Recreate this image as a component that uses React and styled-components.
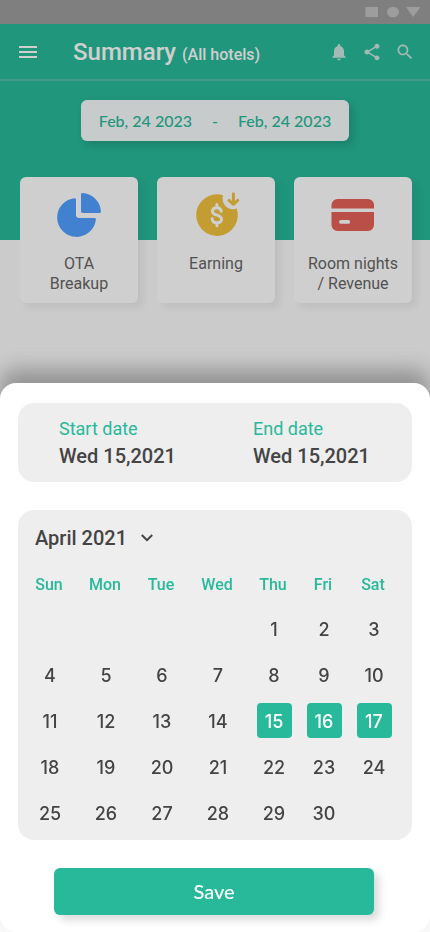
import { useState } from "react"
import styled, { createGlobalStyle } from "styled-components"

const weekDays = ["Sun", "Mon", "Tue", "Wed", "Thu", "Fri", "Sat"]

const weeks = [
  [null, null, null, null, 1, 2, 3],
  [4, 5, 6, 7, 8, 9, 10],
  [11, 12, 13, 14, 15, 16, 17],
  [18, 19, 20, 21, 22, 23, 24],
  [25, 26, 27, 28, 29, 30, null],
]

const PieIcon = () => (
  <svg width="44" height="44" viewBox="0 0 44 44" fill="#529fff">
    <path d="M17.500 5.200C18.300 5.100 19 5.700 19 6.500V22C19 23.700 20.300 25 22 25H37.500C38.300 25 39 25.700 38.900 26.500A19.400 19.400 0 1 1 17.500 5.200Z" />
    <path d="M24 1.500C24 .7 24.700 0 25.500 .1A19.500 19.500 0 0 1 43.900 18.500C44 19.300 43.300 20 42.500 20H26C24.900 20 24 19.100 24 18Z" />
  </svg>
)

const CoinIcon = () => (
  <svg width="44" height="44" viewBox="-2 0 44 44" fill="none" overflow="visible">
    <path
      d="M27 2.200A20.800 20.800 0 1 0 40.700 15.500C33.500 18.500 24.500 12 27 2.200Z"
      fill="#f2c23e"
    />
    <path
      d="M25.200 18.200C24.800 15.700 23.100 14.700 20.800 14.700C18.200 14.700 16.500 16 16.500 18.200C16.500 23.600 25.500 20.600 25.500 26.200C25.500 28.400 23.600 29.700 21 29.700C18.200 29.700 16.300 28.400 16.100 25.800M20.900 11.500V14.700M20.900 29.700V32.700"
      stroke="#fff"
      strokeWidth="3"
      strokeLinecap="round"
    />
    <path
      d="M37.400 .7V11.300M33 7.400L37.400 11.500L41.800 7.400"
      stroke="#f2c23e"
      strokeWidth="3"
      strokeLinecap="round"
      strokeLinejoin="round"
    />
  </svg>
)

const CreditIcon = () => (
  <svg width="44" height="44" viewBox="0 0 44 44" fill="#e66259">
    <path d="M.5 15.500V12A6 6 0 0 1 6.500 6H37A6 6 0 0 1 43 12V15.500Z" />
    <path
      fillRule="evenodd"
      d="M.5 19H43V32A6 6 0 0 1 37 38H6.500A6 6 0 0 1 .5 32ZM10 27A1.900 1.900 0 0 0 10 30.800H17.200A1.900 1.900 0 0 0 17.200 27Z"
    />
  </svg>
)

const App = () => {
  const [range, setRange] = useState([15, 17])

  const pickDay = (day) => {
    if (range[0] !== range[1] || day < range[0]) {
      setRange([day, day])
    } else {
      setRange([range[0], day])
    }
  }

  return (
    <Page>
      <GlobalStyle />
      <StatusBar>
        <svg width="56" height="12" viewBox="0 0 56 12" fill="#c2c2c2">
          <path d="M.5 1H13V11H.5Z" />
          <ellipse cx="28" cy="6" rx="6" ry="5.200" />
          <path d="M41 1H55.500L48.200 11Z" />
        </svg>
      </StatusBar>
      <TopBar>
        <IconButton aria-label="Menu">
          <svg width="18" height="12" viewBox="0 0 18 12" fill="#fff">
            <path d="M0 0H18V2H0ZM0 5H18V7H0ZM0 10H18V12H0Z" />
          </svg>
        </IconButton>
        <Title>
          Summary <small>(All hotels)</small>
        </Title>
        <Actions>
          <IconButton aria-label="Notifications">
            <svg width="20" height="20" viewBox="0 0 24 24" fill="#cbe5df">
              <path d="M12 22c1.100 0 2-.9 2-2h-4c0 1.100.9 2 2 2zm6-6v-5c0-3.070-1.630-5.640-4.500-6.320V4c0-.83-.67-1.500-1.500-1.500s-1.500.67-1.500 1.500v.68C7.640 5.360 6 7.920 6 11v5l-2 2v1h16v-1l-2-2z" />
            </svg>
          </IconButton>
          <IconButton aria-label="Share">
            <svg width="20" height="20" viewBox="0 0 24 24" fill="#cbe5df">
              <path d="M18 16.080c-.76 0-1.440.3-1.960.77L8.910 12.700c.05-.23.09-.46.09-.7s-.04-.47-.09-.7l7.050-4.110c.54.5 1.250.81 2.040.81 1.660 0 3-1.340 3-3s-1.340-3-3-3-3 1.340-3 3c0 .24.04.47.09.7L8.040 9.810C7.500 9.310 6.790 9 6 9c-1.660 0-3 1.340-3 3s1.340 3 3 3c.79 0 1.500-.31 2.040-.81l7.120 4.160c-.05.21-.08.43-.08.65 0 1.610 1.310 2.920 2.920 2.920s2.920-1.310 2.920-2.920-1.310-2.920-2.920-2.920z" />
            </svg>
          </IconButton>
          <IconButton aria-label="Search">
            <svg width="20" height="20" viewBox="0 0 24 24" fill="#cbe5df">
              <path d="M15.500 14h-.79l-.28-.27C15.410 12.590 16 11.110 16 9.500 16 5.910 13.090 3 9.500 3S3 5.910 3 9.500 5.910 16 9.500 16c1.610 0 3.090-.59 4.230-1.570l.27.28v.79l5 4.990L20.490 19l-4.990-5zm-6 0C7.010 14 5 11.990 5 9.500S7.010 5 9.500 5 14 7.010 14 9.500 11.990 14 9.500 14z" />
            </svg>
          </IconButton>
        </Actions>
      </TopBar>
      <Hero>
        <DateRange>
          <span>Feb, 24 2023</span>
          <span>-</span>
          <span>Feb, 24 2023</span>
        </DateRange>
      </Hero>
      <Cards>
        <Card>
          <PieIcon />
          <CardLabel>
            OTA
            <br />
            Breakup
          </CardLabel>
        </Card>
        <Card>
          <CoinIcon />
          <CardLabel>Earning</CardLabel>
        </Card>
        <Card>
          <CreditIcon />
          <CardLabel>
            Room nights
            <br />/ Revenue
          </CardLabel>
        </Card>
      </Cards>

      <Backdrop />
      <Sheet role="dialog" aria-label="Select dates">
        <Dates>
          <div>
            <DateLabel>Start date</DateLabel>
            <DateValue>Wed 15,2021</DateValue>
          </div>
          <div>
            <DateLabel>End date</DateLabel>
            <DateValue>Wed 15,2021</DateValue>
          </div>
        </Dates>
        <Calendar>
          <MonthButton>
            April 2021
            <svg width="12" height="8" viewBox="0 0 12 8" fill="none" stroke="#444" strokeWidth="2">
              <path d="M.8 1L6 6.200L11.200 1" />
            </svg>
          </MonthButton>
          <Grid>
            <thead>
              <tr>
                {weekDays.map((name) => (
                  <DayName key={name} $narrow={name === "Fri"}>{name}</DayName>
                ))}
              </tr>
            </thead>
            <tbody>
              {weeks.map((week, i) => (
                <tr key={i}>
                  {week.map((day, j) => (
                    <DayCell key={j}>
                      {day && (
                        <Day $selected={day >= range[0] && day <= range[1]} onClick={() => pickDay(day)}>
                          {day}
                        </Day>
                      )}
                    </DayCell>
                  ))}
                </tr>
              ))}
            </tbody>
          </Grid>
        </Calendar>
        <SaveButton>Save</SaveButton>
      </Sheet>
    </Page>
  )
}

export default App


const GlobalStyle = createGlobalStyle`
  * {
    box-sizing: border-box;
  }
  body {
    margin: 0;
    background: #fbfbfb;
    font-family: Roboto, sans-serif;
    color: #444;
  }
  button {
    border: none;
    padding: 0;
    background: none;
    font-family: inherit;
    color: inherit;
    cursor: pointer;
  }
`
const Page = styled.div`
  min-height: 100vh;
`
const StatusBar = styled.div`
  height: 24px;
  padding-right: 9px;
  background: #9d9d9d;
  display: flex;
  align-items: center;
  justify-content: flex-end;
`
const TopBar = styled.header`
  height: 57px;
  padding: 0 15px 0 18px;
  background: #28b99a;
  border-bottom: 2px solid #58bda7;
  display: flex;
  align-items: center;
`
const IconButton = styled.button`
  min-width: 20px;
  height: 20px;
  display: flex;
  align-items: center;
  justify-content: center;
`
const Title = styled.h1`
  flex: 1;
  margin: 0 0 0 35px;
  padding-top: 4px;
  font-size: 24px;
  line-height: 28px;
  font-weight: 500;
  color: #fff;
  white-space: nowrap;
  small {
    font-size: 16px;
  }
`
const Actions = styled.div`
  display: flex;
  gap: 13px;
`
const Hero = styled.section`
  height: 159px;
  padding-top: 19px;
  background: #28b99a;
  display: flex;
  justify-content: center;
  align-items: flex-start;
`
const DateRange = styled.button`
  && {
    height: 41px;
    padding: 0 18px;
    border-radius: 6px;
    background: #f6fbfb;
    box-shadow: 4px 4px 8px rgba(0, 0, 0, 0.15);
    display: flex;
    align-items: center;
    gap: 20px;
    font-family: Lato, sans-serif;
    font-size: 16px;
    font-weight: 500;
    color: #28b99a;
  }
`
const Cards = styled.div`
  margin-top: -63px;
  padding: 0 18px 0 20px;
  display: flex;
  justify-content: space-between;
`
const Card = styled.article`
  width: 118px;
  height: 126px;
  padding: 16px 12px 0;
  border-radius: 6px;
  background: #fff;
  box-shadow: 5px 5px 8px rgba(0, 0, 0, 0.07);
  display: flex;
  flex-direction: column;
  align-items: center;
`
const CardLabel = styled.p`
  margin: 17px 0 0;
  font-size: 16px;
  line-height: 20px;
  text-align: center;
  white-space: nowrap;
  color: #666;
`
const Backdrop = styled.div`
  position: fixed;
  inset: 0 0 40px;
  background: rgba(0, 0, 0, 0.19);
`
const Sheet = styled.section`
  position: fixed;
  left: 0;
  right: 0;
  bottom: 0;
  padding: 20px 18px 17px;
  border-radius: 16px;
  background: #fff;
  box-shadow: 0 -14px 20px rgba(0, 0, 0, 0.27);
  display: flex;
  flex-direction: column;
  gap: 28px;
`
const Dates = styled.div`
  padding: 14px 0 11px 41px;
  border-radius: 16px;
  background: #eee;
  display: grid;
  grid-template-columns: 194px 1fr;
`
const DateLabel = styled.div`
  font-size: 18px;
  line-height: 24px;
  color: #28b99a;
`
const DateValue = styled.div`
  font-size: 20px;
  line-height: 30px;
  font-weight: 500;
`
const Calendar = styled.div`
  padding: 16px 10px 3px 4px;
  border-radius: 16px;
  background: #eee;
`
const MonthButton = styled.button`
  && {
    margin: 0 0 11px 13px;
    display: flex;
    align-items: center;
    gap: 14px;
    font-size: 20px;
    line-height: 24px;
    font-weight: 500;
  }
`
const Grid = styled.table`
  width: 100%;
  table-layout: fixed;
  border-collapse: collapse;
`
const DayName = styled.th`
  width: ${(props) => (props.$narrow ? "44px" : "auto")};
  height: 46px;
  padding: 0 2px 0 0;
  font-size: 16px;
  font-weight: 500;
  color: #28b99a;
`
const DayCell = styled.td`
  height: 46px;
  padding: 0 0 3px;
  text-align: center;
`
const Day = styled.button`
  && {
    width: 35px;
    height: 35px;
    padding-top: 2px;
    border-radius: 4px;
    background: ${(props) => (props.$selected ? "#28b99a" : "transparent")};
    color: ${(props) => (props.$selected ? "#fff" : "#444")};
    font-family: Inter, sans-serif;
    font-size: 18px;
    line-height: 22px;
    font-weight: 500;
    vertical-align: middle;
  }
`
const SaveButton = styled.button`
  && {
    height: 47px;
    margin: 0 38px 0 36px;
    padding-bottom: 2px;
    border-radius: 6px;
    background: #28b99a;
    box-shadow: 5px 5px 8px rgba(0, 0, 0, 0.15);
    font-family: Lato, sans-serif;
    font-size: 20px;
    font-weight: 500;
    color: #fff;
  }
`
